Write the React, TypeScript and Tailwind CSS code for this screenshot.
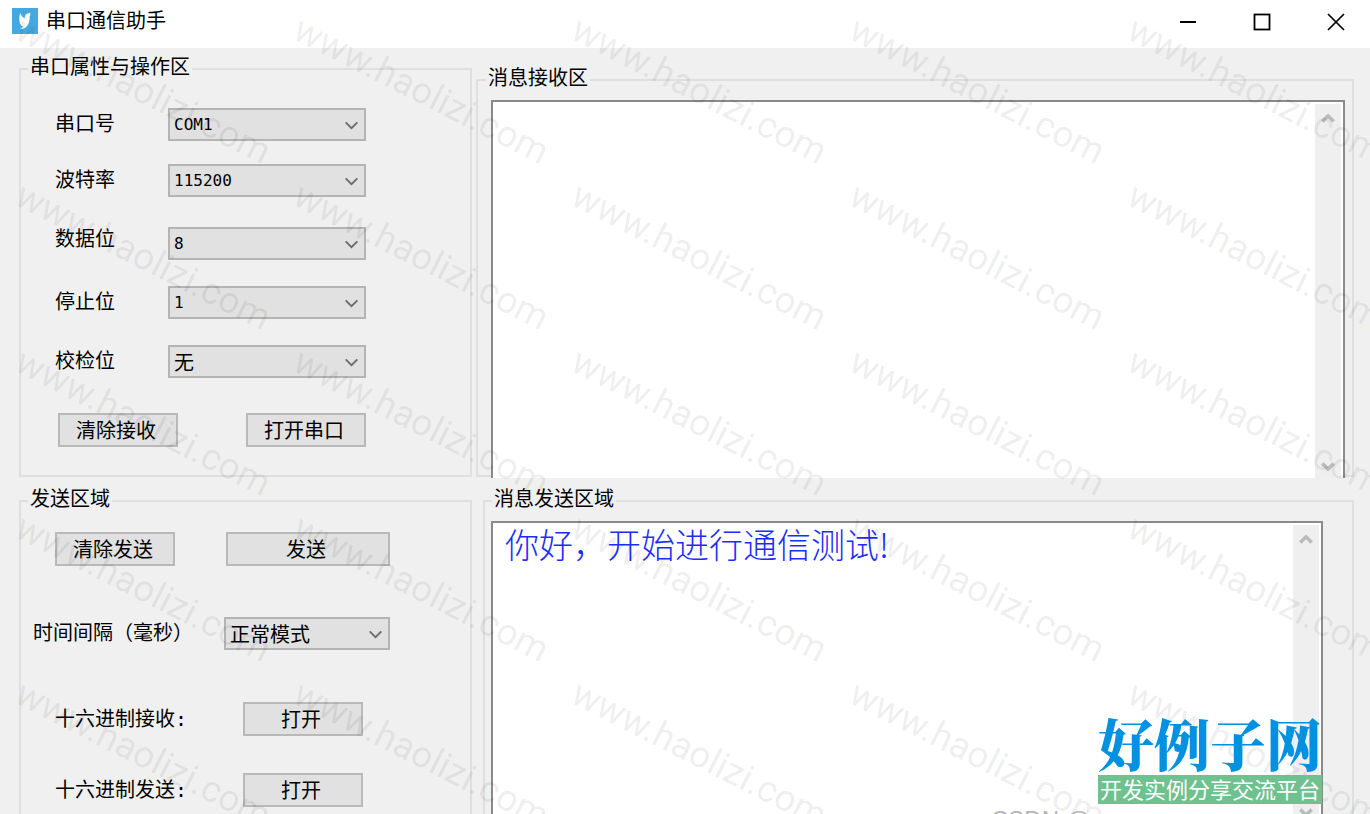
import type { ReactNode } from "react";

const uiFont = "font-['DejaVu_Sans_Mono','Noto_Sans_CJK_SC',monospace]";

function Chevron({ className, weight = 2 }: { className: string; weight?: number }) {
  return (
    <svg viewBox="0 0 16 10" className={className} fill="none" stroke="currentColor" aria-hidden="true">
      <path d="M1.500 1.500 8 8l6.500-6.500" strokeWidth={weight} />
    </svg>
  );
}

function Combo({ id, options, className }: { id: string; options: string[]; className: string }) {
  return (
    <div className={`relative ${className}`}>
      <select
        id={id}
        className="block h-[33px] w-full appearance-none rounded-none border-2 border-[#b4b4b4] bg-[#e1e1e1] pl-1 pr-8 text-base text-black [&:lang(zh)]:pt-0.5 [&:lang(zh)]:text-[20px] [&:lang(zh)]:leading-6"
        lang={/^[\x20-\x7e]*$/.test(options[0]) ? "en" : "zh"}
      >
        {options.map((o) => (
          <option key={o}>{o}</option>
        ))}
      </select>
      <Chevron className="pointer-events-none absolute right-[7px] top-[13px] h-[9px] w-[15px] text-[#6a6a6a]" />
    </div>
  );
}

function PushButton({ children, className }: { children: ReactNode; className: string }) {
  return (
    <button
      type="button"
      className={`h-[34px] border-2 border-[#b9b9b9] bg-[#e1e1e1] pr-1 pt-0.5 text-center text-[20px] leading-6 ${className}`}
    >
      {children}
    </button>
  );
}

function Group({ title, className, children }: { title: string; className: string; children: ReactNode }) {
  return (
    <fieldset className={`flex min-w-0 flex-col border-2 border-[#dfdfdf] ${className}`}>
      <legend className="px-0.5 pb-1 text-[20px] leading-5">{title}</legend>
      {children}
    </fieldset>
  );
}

function ScrollTrack() {
  return (
    <div className="flex w-[26px] shrink-0 flex-col justify-between bg-[#efefef] text-[#bababa]">
      <button type="button" aria-label="向上滚动" className="flex h-7 items-center justify-center">
        <Chevron weight={4} className="h-[9px] w-[14px] rotate-180" />
      </button>
      <button type="button" aria-label="向下滚动" className="flex h-6 items-center justify-center">
        <Chevron weight={4} className="h-[9px] w-[14px]" />
      </button>
    </div>
  );
}

function TextPane({ label, value, className }: { label: string; value: string; className: string }) {
  return (
    <div className={`flex min-h-0 flex-1 border-2 border-b-0 border-[#8a8a8a] bg-white pr-0.5 pt-0.5 ${className}`}>
      <textarea
        aria-label={label}
        defaultValue={value}
        spellCheck={false}
        className="min-w-0 flex-1 resize-none overflow-hidden bg-transparent px-3 font-['KaiTi','Noto_Sans_CJK_SC',sans-serif] text-[34px] font-light leading-[38px] text-[#1c2cff] outline-none"
      />
      <ScrollTrack />
    </div>
  );
}

const ports = [
  { id: "port", label: "串口号", options: ["COM1", "COM2", "COM3"], row: "items-center" },
  { id: "baud", label: "波特率", options: ["115200", "57600", "9600"], row: "items-center mt-[23px]" },
  { id: "data", label: "数据位", options: ["8", "7", "6"], row: "items-start mt-[30px]" },
  { id: "stop", label: "停止位", options: ["1", "2"], row: "items-center mt-[26px]" },
  { id: "parity", label: "校检位", options: ["无", "奇", "偶"], row: "items-center mt-[26px]" },
];

function Watermark() {
  return (
    <div
      aria-hidden="true"
      className="pointer-events-none absolute inset-0 overflow-hidden pl-[10px] pt-[43px] font-['Roboto',sans-serif] text-[37px] text-black/8"
    >
      <div className="grid auto-rows-[166px] grid-cols-[repeat(5,278px)]">
        {Array.from({ length: 25 }, (_, i) => (
          <span key={i} className="h-0 w-0 whitespace-nowrap leading-none">
            <span className="block w-max origin-bottom-left -translate-y-full rotate-[27deg]">www.haolizi.com</span>
          </span>
        ))}
      </div>
    </div>
  );
}

export default function App() {
  return (
    <div className={`relative flex h-screen flex-col overflow-hidden bg-[#f0f0f0] text-black ${uiFont}`}>
      <header className="flex h-12 shrink-0 items-start justify-between bg-white pl-3">
        <div className="flex items-center gap-2 pt-2">
          <svg viewBox="0 0 26 26" className="h-[26px] w-[26px]" aria-hidden="true">
            <rect width="26" height="26" fill="#45a9e1" />
            <path
              fill="#fff"
              d="M8.500 5c.7 3 2.200 4.500 4.200 5.200.1-3 1.600-5 3.600-4.800l2.200-.9-.6 2 .8.600-1 1.200C18 14 15.500 20.500 10 21l-1.700-.8c1.500-.1 2.400-.7 2.800-1.600-1.400-.3-2.100-1.200-2.300-2.200-.9-.8-1.200-1.900-1-2.900-.6-1-.7-2-.4-3C7.200 8.300 7.700 6.500 8.500 5z"
            />
          </svg>
          <h1 className="text-[20px] leading-[26px]">串口通信助手</h1>
        </div>
        <div className="flex gap-14 pr-[25px] pt-[13px]">
          <button type="button" aria-label="最小化" className="size-[18px]">
            <svg viewBox="0 0 18 18" className="size-[18px]"><path d="M1 9h16" stroke="#000" strokeWidth="2" /></svg>
          </button>
          <button type="button" aria-label="最大化" className="size-[18px]">
            <svg viewBox="0 0 18 18" className="size-[18px]"><rect x="1.500" y="1.500" width="15" height="15" fill="none" stroke="#000" strokeWidth="1.800" /></svg>
          </button>
          <button type="button" aria-label="关闭" className="size-[18px]">
            <svg viewBox="0 0 18 18" className="size-[18px]"><path d="m1 1 16 16M17 1 1 17" stroke="#000" strokeWidth="1.700" /></svg>
          </button>
        </div>
      </header>

      <main className="grid min-h-0 flex-1 grid-cols-[453px_minmax(0,1fr)] grid-rows-[auto_minmax(0,1fr)] gap-x-1 gap-y-3 pl-[19px] pr-4 pt-[9px]">
        <Group title="串口属性与操作区" className="pb-[28px] pl-[34px] pr-[104px] [&>legend]:-ml-[27px]">
          <div className="pt-[27px]">
            {ports.map((p) => (
              <div key={p.id} className={`flex justify-between ${p.row}`}>
                <label htmlFor={p.id} className="pb-0.5 text-[20px] leading-6">{p.label}</label>
                <Combo id={p.id} options={p.options} className="w-[198px]" />
              </div>
            ))}
            <div className="mt-[35px] flex justify-between pl-[3px]">
              <PushButton className="w-[120px]">清除接收</PushButton>
              <PushButton className="w-[120px]">打开串口</PushButton>
            </div>
          </div>
        </Group>

        <Group title="消息接收区" className="mt-[11px] pl-[13px] pr-[7px] [&>legend]:-ml-[5px]">
          <TextPane label="消息接收区" value="" className="relative -mb-[3px] mt-2" />
        </Group>

        <Group title="发送区域" className="border-b-0 pl-[34px] pr-[80px] [&>legend]:-ml-[27px]">
          <div className="flex justify-between pt-[19px]">
            <PushButton className="w-[120px]">清除发送</PushButton>
            <PushButton className="w-[164px]">发送</PushButton>
          </div>
          <div className="-ml-[22px] mt-[51px] flex items-center justify-between">
            <label htmlFor="interval" className="pb-0.5 text-[20px] leading-6">时间间隔（毫秒）</label>
            <Combo id="interval" options={["正常模式", "定时模式"]} className="w-[166px]" />
          </div>
          <div className="mt-[52px] flex items-center justify-between pr-[27px]">
            <span className="text-[20px] leading-6">十六进制接收:</span>
            <PushButton className="w-[120px]">打开</PushButton>
          </div>
          <div className="mt-[37px] flex items-center justify-between pr-[27px]">
            <span className="text-[20px] leading-6">十六进制发送:</span>
            <PushButton className="w-[120px]">打开</PushButton>
          </div>
        </Group>

        <Group title="消息发送区域" className="ml-[7px] border-b-0 pl-[6px] pr-[29px] [&>legend]:ml-px">
          <TextPane label="消息发送区域" value="你好，开始进行通信测试!" className="-mb-[10px] mt-2" />
        </Group>
      </main>

      <Watermark />

      <p className="absolute bottom-0 right-[280px] h-[3px] overflow-hidden font-['Liberation_Sans',sans-serif] text-2xl leading-[18px] text-[#b5b5b5]">
        CSDN @
      </p>

      <div className="absolute bottom-[10px] right-12 font-['Noto_Serif_CJK_SC','Noto_Sans_CJK_SC',serif]">
        <p className="pb-1 text-[56px] font-black leading-[58px] text-[#0092e0]">好例子网</p>
        <p className="bg-[#70c190] px-0.5 pb-[3px] font-['Noto_Sans_CJK_SC',sans-serif] text-[22px] leading-[26px] text-white">
          开发实例分享交流平台
        </p>
      </div>
    </div>
  );
}
